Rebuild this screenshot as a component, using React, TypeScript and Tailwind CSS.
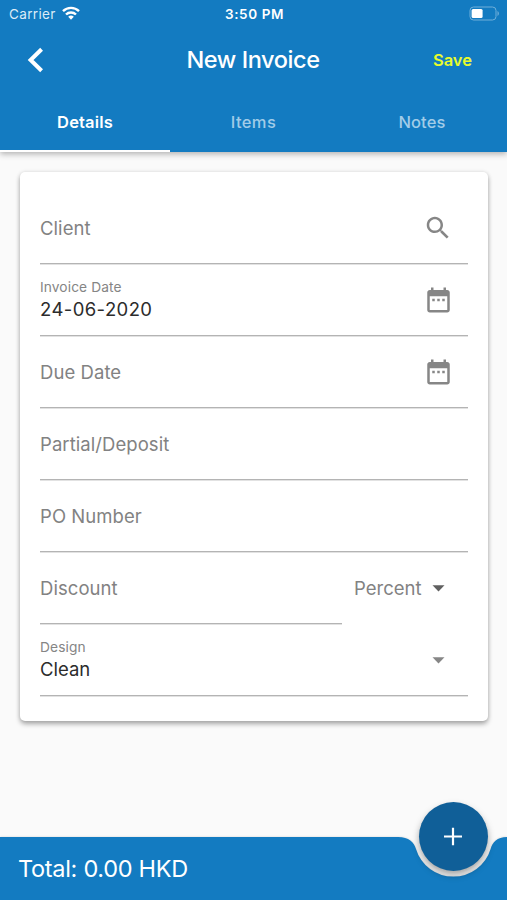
import type { ReactNode } from "react";

function SearchIcon() {
  return (
    <svg viewBox="0 0 24 24" className="size-[30px] fill-[#868686]">
      <path d="M15.5 14h-.79l-.28-.27C15.41 12.59 16 11.11 16 9.5 16 5.91 13.09 3 9.5 3S3 5.91 3 9.5 5.91 16 9.5 16c1.61 0 3.09-.59 4.23-1.57l.27.28v.79l5 4.99L20.49 19l-4.99-5zm-6 0C7.01 14 5 11.99 5 9.5S7.01 5 9.5 5 14 7.01 14 9.5 11.99 14 9.5 14z" />
    </svg>
  );
}

function CalendarIcon() {
  return (
    <svg viewBox="0 0 24 24" className="size-[30px] translate-x-[0.5px] fill-[#868686]">
      <path d="M9 11H7v2h2v-2zm4 0h-2v2h2v-2zm4 0h-2v2h2v-2zm2-7h-1V2h-2v2H8V2H6v2H5c-1.11 0-1.99.9-1.99 2L3 20c0 1.1.89 2 2 2h14c1.1 0 2-.9 2-2V6c0-1.1-.9-2-2-2zm0 16H5V9h14v11z" />
    </svg>
  );
}

function Caret({ className }: { className: string }) {
  return (
    <svg viewBox="0 0 24 24" className={`size-[30px] translate-x-[0.5px] ${className}`}>
      <path d="M7.2 9.8l4.8 5 4.8-5z" />
    </svg>
  );
}

function Field({ label, value, icon, valueClass = "" }: { label: string; value?: string; icon?: ReactNode; valueClass?: string }) {
  return (
    <div className="flex h-[72px] items-center justify-between border-b border-[#b4b4b4] pr-[14.5px] shadow-[0_1px_0_#e2e2e2]">
      {value ? (
        <div className="flex flex-col">
          <span className="text-[13.75px] leading-[18px] tracking-[0.1px] text-[#858585]">{label}</span>
          <span className={`text-[18.5px] leading-[26px] text-[#2c2c2c] ${valueClass}`}>{value}</span>
        </div>
      ) : (
        <span className="text-[18.5px] leading-6 tracking-[0.06px] text-[#828282]">{label}</span>
      )}
      {icon}
    </div>
  );
}

export default function App() {
  return (
    <div className="flex h-[900px] w-[507px] flex-col overflow-hidden bg-[#fafafa] font-['Inter','Liberation_Sans',sans-serif]">
      <header className="z-10 flex h-[152px] shrink-0 flex-col bg-[#137bc1] text-white shadow-[0_2px_6px_rgba(0,0,0,0.3)]">
        <div className="grid h-7 grid-cols-3 items-center pr-[7px] pl-[9px] text-[13.5px]">
          <div className="flex items-center gap-[6px] text-[#dcecf7]">
            <span className="tracking-[0.35px]">Carrier</span>
            <svg viewBox="0 0 18 14" className="h-[14px] w-[18px] -translate-y-px fill-none stroke-white stroke-[2.4]">
              <path d="M1 5.2a11.4 11.4 0 0 1 16 0M4 8.5a7.1 7.1 0 0 1 10 0" />
              <path d="M6.2 10.8a4 4 0 0 1 5.6 0L9 13.7z" className="fill-white stroke-none" />
            </svg>
          </div>
          <span className="text-center font-semibold tracking-[0.6px]">3:50 PM</span>
          <svg viewBox="0 0 31 15" className="h-[15px] w-[31px] -translate-y-px justify-self-end">
            <rect x="1" y="1" width="26" height="13" rx="3.5" className="fill-none stroke-[#70b0da]" />
            <rect x="2.6" y="2.9" width="11" height="9.2" rx="1.5" fill="white" />
            <path d="M28.5 5v5c1.8-.8 1.8-4.2 0-5z" fill="#70b0da" />
          </svg>
        </div>
        <div className="grid h-16 grid-cols-3 items-center">
          <svg viewBox="0 0 18 26" className="ml-[26px] h-[26px] w-[18px] fill-none stroke-white stroke-4">
            <path d="M15.6 2.3L4.6 13l11 10.7" />
          </svg>
          <h1 className="pr-px text-center text-[23.5px] font-medium tracking-[-0.4px] whitespace-nowrap">New Invoice</h1>
          <button className="mr-[35px] justify-self-end text-[16.5px] font-semibold text-[#e8fb2c]">Save</button>
        </div>
        <nav className="grid flex-1 grid-cols-3 text-center text-[16.5px] tracking-[0.15px]">
          <span className="-mr-px flex items-center justify-center border-b-2 border-white pt-[2px] font-semibold">Details</span>
          <span className="flex items-center justify-center border-b-2 border-transparent pt-[2px] font-medium tracking-[0.4px] text-[#a1cce8]">Items</span>
          <span className="flex items-center justify-center border-b-2 border-transparent pt-[2px] pr-px font-medium text-[#a1cce8]">Notes</span>
        </nav>
      </header>
      <main className="flex-1 pt-5 pr-[19.5px] pl-5">
        <section className="h-[549px] rounded-[5px] bg-white px-5 pt-5 shadow-[0_3px_5px_rgba(0,0,0,0.32),0_0_4px_rgba(0,0,0,0.1)]">
          <Field label="Client" icon={<SearchIcon />} />
          <Field label="Invoice Date" value="24-06-2020" valueClass="tracking-[0.4px]" icon={<CalendarIcon />} />
          <Field label="Due Date" icon={<CalendarIcon />} />
          <Field label="Partial/Deposit" />
          <Field label="PO Number" />
          <div className="flex">
            <div className="w-[302px]">
              <Field label="Discount" />
            </div>
            <div className="flex h-[72px] flex-1 items-center justify-between pr-[14.5px] pl-3">
              <span className="pt-px text-[18.5px] text-[#828282]">Percent</span>
              <Caret className="fill-[#606060]" />
            </div>
          </div>
          <Field label="Design" value="Clean" icon={<Caret className="fill-[#868686]" />} />
        </section>
      </main>
      <footer className="relative flex h-[63px] shrink-0 items-center pl-[18px]">
        <svg viewBox="0 0 507 63" className="absolute inset-0 h-[63px] w-[507px] fill-[#137bc1] drop-shadow-[0_0_1px_rgba(0,0,0,0.15)]">
          <path d="M0 0H398C409 0 414 5 416 12A39 39 0 0 0 490.600 12C492.500 5 497 0 507 0V63H0Z" />
        </svg>
        <span className="relative text-[23.5px] tracking-[-0.3px] text-white">Total: 0.00 HKD</span>
        <button className="absolute top-[-35px] left-[419px] flex size-[68.500px] items-center justify-center rounded-full bg-[#105f98] shadow-[0_4px_7px_rgba(0,0,0,0.35)]">
          <svg viewBox="0 0 18 18" className="size-[18px] translate-y-[0.5px] stroke-white stroke-[2.2]">
            <path d="M9 0v18M0 9h18" />
          </svg>
        </button>
      </footer>
    </div>
  );
}
